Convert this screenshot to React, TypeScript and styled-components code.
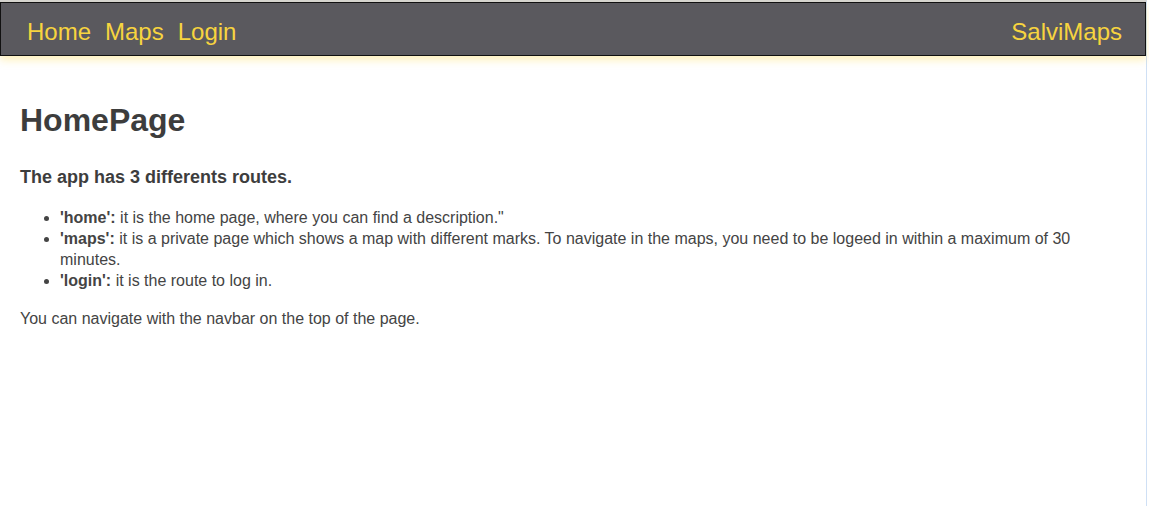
import React from "react";
import styled, { createGlobalStyle } from "styled-components";

const GlobalStyle = createGlobalStyle`
  html, body {
    margin: 0;
    padding: 0;
    background: #fff;
  }
  body {
    font-family: "Segoe UI", "Liberation Sans", sans-serif;
    color: #444;
  }
`;

const Page = styled.div`
  width: 1147px;
  min-height: 506px;
  border-right: 1px solid #cfe0f5;
  border-top: 2px solid #d4d4d4;
  box-sizing: border-box;
`;

const Navbar = styled.nav`
  display: flex;
  align-items: center;
  justify-content: space-between;
  height: 54px;
  padding: 5px 23px 0 26px;
  background: #5a595e;
  border: 1px solid #111;
  box-shadow: 0 4px 8px rgba(255, 215, 60, 0.35);
  box-sizing: border-box;
`;

const NavLinks = styled.div`
  display: flex;
  gap: 14px;
`;

const NavLink = styled.a`
  color: #f7d43f;
  font-size: 24px;
  text-decoration: none;
  line-height: 1;
`;

const Content = styled.main`
  padding: 26px 20px 20px;
`;

const Title = styled.h1`
  margin: 20px 0 0;
  font-size: 32px;
  font-weight: 700;
  color: #3d3d3d;
`;

const Subtitle = styled.h3`
  margin: 28px 0 0;
  font-size: 18px;
  font-weight: 700;
  color: #3d3d3d;
`;

const RouteList = styled.ul`
  margin: 19px 0 0;
  padding-left: 40px;
  font-size: 16px;
  line-height: 21px;
`;

const Note = styled.p`
  margin: 17px 0 0;
  font-size: 16px;
  line-height: 21px;
`;

const routes = [
  { name: "home", text: "it is the home page, where you can find a description.\"" },
  {
    name: "maps",
    text: "it is a private page which shows a map with different marks. To navigate in the maps, you need to be logeed in within a maximum of 30 minutes.",
  },
  { name: "login", text: "it is the route to log in." },
];

export default function App() {
  return (
    <>
      <GlobalStyle />
      <Page>
        <Navbar>
          <NavLinks>
            <NavLink href="#">Home</NavLink>
            <NavLink href="#">Maps</NavLink>
            <NavLink href="#">Login</NavLink>
          </NavLinks>
          <NavLink href="#">SalviMaps</NavLink>
        </Navbar>
        <Content>
          <Title>HomePage</Title>
          <Subtitle>The app has 3 differents routes.</Subtitle>
          <RouteList>
            {routes.map((r) => (
              <li key={r.name}>
                <strong>'{r.name}':</strong> {r.text}
              </li>
            ))}
          </RouteList>
          <Note>You can navigate with the navbar on the top of the page.</Note>
        </Content>
      </Page>
    </>
  );
}
